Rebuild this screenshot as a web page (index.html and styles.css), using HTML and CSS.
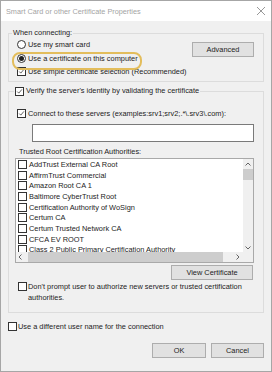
FILE: index.html
```html
<!DOCTYPE html>
<html lang="en">
<head>
    <meta charset="UTF-8">
    <title>Smart Card or other Certificate Properties</title>
    <link rel="stylesheet" href="styles.css">
</head>
<body>
    <div class="window">
        <div class="titlebar">
            <span class="title">Smart Card or other Certificate Properties</span>
            <svg class="close" width="10" height="10" viewBox="0 0 10 10"><path d="M1 1L9 9M9 1L1 9" stroke="#8c8c8c" stroke-width="0.9" fill="none"/></svg>
        </div>

        <div class="dialog-body">
            <!-- When connecting -->
            <fieldset class="group connect-group">
                <legend>When connecting:</legend>
                <div class="connect-inner">
                    <div class="options">
                        <div class="opt"><span class="radio"></span>Use my smart card</div>
                        <div class="opt picked"><span class="radio on"></span>Use a certificate on this computer</div>
                        <div class="opt"><span class="check"><svg viewBox="0 0 9 9"><path d="M1.6 4.6L3.6 6.6L7.6 1.8" /></svg></span>Use simple certificate selection (Recommended)</div>
                    </div>
                    <button class="btn advanced">Advanced</button>
                </div>
            </fieldset>

            <!-- Verify server -->
            <fieldset class="group verify-group">
                <legend><span class="opt legend-opt"><span class="check"><svg viewBox="0 0 9 9"><path d="M1.6 4.6L3.6 6.6L7.6 1.8" /></svg></span>Verify the server's identity by validating the certificate</span></legend>
                <div class="verify-inner">
                    <div class="opt servers-opt"><span class="check"><svg viewBox="0 0 9 9"><path d="M1.6 4.6L3.6 6.6L7.6 1.8" /></svg></span>Connect to these servers (examples:srv1;srv2;.*\.srv3\.com):</div>
                    <div class="textbox"></div>
                    <div class="list-label">Trusted Root Certification Authorities:</div>
                    <div class="listbox">
                        <div class="list-items">
                            <div class="item"><span class="check empty"></span>AddTrust External CA Root</div>
                            <div class="item"><span class="check empty"></span>AffirmTrust Commercial</div>
                            <div class="item"><span class="check empty"></span>Amazon Root CA 1</div>
                            <div class="item"><span class="check empty"></span>Baltimore CyberTrust Root</div>
                            <div class="item"><span class="check empty"></span>Certification Authority of WoSign</div>
                            <div class="item"><span class="check empty"></span>Certum CA</div>
                            <div class="item"><span class="check empty"></span>Certum Trusted Network CA</div>
                            <div class="item"><span class="check empty"></span>CFCA EV ROOT</div>
                            <div class="item"><span class="check empty"></span>Class 2 Public Primary Certification Authority</div>
                        </div>
                        <div class="vscroll">
                            <svg class="arrow" viewBox="0 0 6 4"><path d="M0.5 3.5L3 1L5.5 3.5"/></svg>
                            <div class="vthumb"></div>
                            <div class="spacer"></div>
                            <svg class="arrow" viewBox="0 0 6 4"><path d="M0.5 0.5L3 3L5.5 0.5"/></svg>
                        </div>
                        <div class="hscroll">
                            <svg class="harrow" viewBox="0 0 4 6"><path d="M3.5 0.5L1 3L3.5 5.5"/></svg>
                            <div class="hthumb"></div>
                            <svg class="harrow" viewBox="0 0 4 6"><path d="M0.5 0.5L3 3L0.5 5.5"/></svg>
                        </div>
                        <div class="corner"></div>
                    </div>
                    <button class="btn view-cert">View Certificate</button>
                    <div class="opt prompt-opt"><span class="check empty"></span><span>Don't prompt user to authorize new servers or trusted certification authorities.</span></div>
                </div>
            </fieldset>

            <div class="opt user-opt"><span class="check empty"></span>Use a different user name for the connection</div>

            <div class="dialog-buttons">
                <button class="btn ok">OK</button>
                <button class="btn cancel">Cancel</button>
            </div>
        </div>
    </div>
</body>
</html>
```

FILE: styles.css
```css
* {
    box-sizing: border-box;
}
body {
    margin: 0;
    font-family: 'Liberation Sans', Arial, sans-serif;
    font-size: 7.4px;
    color: #1c1c1c;
}
.window {
    width: 272px;
    height: 372px;
    border: 1px solid #a6a6a6;
    background: #f0f0f0;
}
.titlebar {
    height: 20px;
    background: #fff;
    display: flex;
    align-items: center;
    justify-content: space-between;
    padding: 0 5px 0 5px;
}
.title {
    color: #a4a4a4;
    font-size: 7.3px;
}
.dialog-body {
    padding: 0 7px;
}

/* group boxes */
.group {
    margin: 0;
    padding: 0;
    border: 1px solid #dcdcdc;
    min-width: 0;
}
.group legend {
    padding: 0 1px;
    height: 10px;
    line-height: 10px;
}
.connect-group {
    margin-top: 7px;
}
.connect-group legend {
    margin-left: 3px;
}
.connect-inner {
    display: flex;
    justify-content: space-between;
    align-items: flex-start;
    padding: 0 9px 2.5px 8px;
}
.verify-group {
    margin-top: 4px;
}
.verify-group legend {
    margin-left: 5px;
}
.verify-inner {
    display: flex;
    flex-direction: column;
    padding: 11px 9px 9px 6px;
}

/* options */
.opt {
    display: flex;
    align-items: center;
    gap: 2px;
    height: 13.5px;
    white-space: nowrap;
}
.legend-opt {
    height: 10px;
}
.picked {
    position: relative;
}
.picked::after {
    content: "";
    position: absolute;
    left: -5px;
    top: 0;
    width: 126px;
    height: 14px;
    border: 2px solid #e3bd5c;
    border-radius: 8px;
}
.radio {
    width: 9px;
    height: 9px;
    border: 1px solid #333;
    border-radius: 50%;
    background: #fff;
    display: flex;
    align-items: center;
    justify-content: center;
    flex-shrink: 0;
}
.radio.on::after {
    content: "";
    width: 5px;
    height: 5px;
    border-radius: 50%;
    background: #222;
}
.check {
    width: 9px;
    height: 9px;
    border: 1px solid #333;
    background: #fff;
    flex-shrink: 0;
    display: block;
}
.check svg {
    display: block;
    width: 7px;
    height: 7px;
    fill: none;
    stroke: #222;
    stroke-width: 0.9;
}
.servers-opt {
    height: 12px;
    margin-left: 2px;
}
.textbox {
    margin: 5px 0 0 17px;
    height: 18px;
    border: 1px solid #7a7a7a;
    background: #fff;
}
.list-label {
    margin: 5px 0 0 4px;
    height: 10px;
    line-height: 10px;
}

/* list of certificates */
.listbox {
    margin-top: 1px;
    height: 105px;
    border: 1px solid #a9a9a9;
    background: #fff;
    display: grid;
    grid-template-columns: 1fr 10px;
    grid-template-rows: 1fr 10px;
}
.list-items {
    overflow: hidden;
    padding-left: 2px;
}
.item {
    display: flex;
    align-items: center;
    gap: 2px;
    height: 10.7px;
    white-space: nowrap;
}
.vscroll {
    background: #f0f0f0;
    display: flex;
    flex-direction: column;
    align-items: center;
    padding: 3px 0 2px;
}
.arrow {
    width: 6px;
    height: 4px;
    fill: none;
    stroke: #555;
    stroke-width: 0.9;
}
.vthumb {
    margin-top: 3px;
    width: 10px;
    height: 11px;
    background: #cdcdcd;
}
.spacer {
    flex: 1;
}
.hscroll {
    background: #f0f0f0;
    display: flex;
    align-items: center;
    padding: 0 3px 0 2px;
}
.harrow {
    width: 4px;
    height: 6px;
    fill: none;
    stroke: #555;
    stroke-width: 0.9;
}
.hthumb {
    margin: 0 13px 0 6px;
    flex: 1;
    height: 10px;
    background: #cdcdcd;
}
.corner {
    background: #f0f0f0;
}

/* buttons */
.btn {
    height: 15px;
    padding: 0;
    background: #e1e1e1;
    border: 1px solid #adadad;
    font: inherit;
    color: inherit;
}
.advanced {
    width: 62px;
    margin-top: 4px;
}
.view-cert {
    align-self: flex-end;
    width: 82px;
    margin: 2px 1px 0 0;
}
.prompt-opt {
    height: auto;
    align-items: flex-start;
    white-space: normal;
    margin: 1px 0 0 3px;
    line-height: 11px;
    gap: 1px;
}
.prompt-opt .check {
    margin-top: 1px;
}
.user-opt {
    margin-top: 7px;
    height: 12px;
    gap: 1px;
}
.dialog-buttons {
    display: flex;
    justify-content: flex-end;
    gap: 5px;
    margin-top: 11px;
}
.ok {
    width: 54px;
}
.cancel {
    width: 53px;
}
```
